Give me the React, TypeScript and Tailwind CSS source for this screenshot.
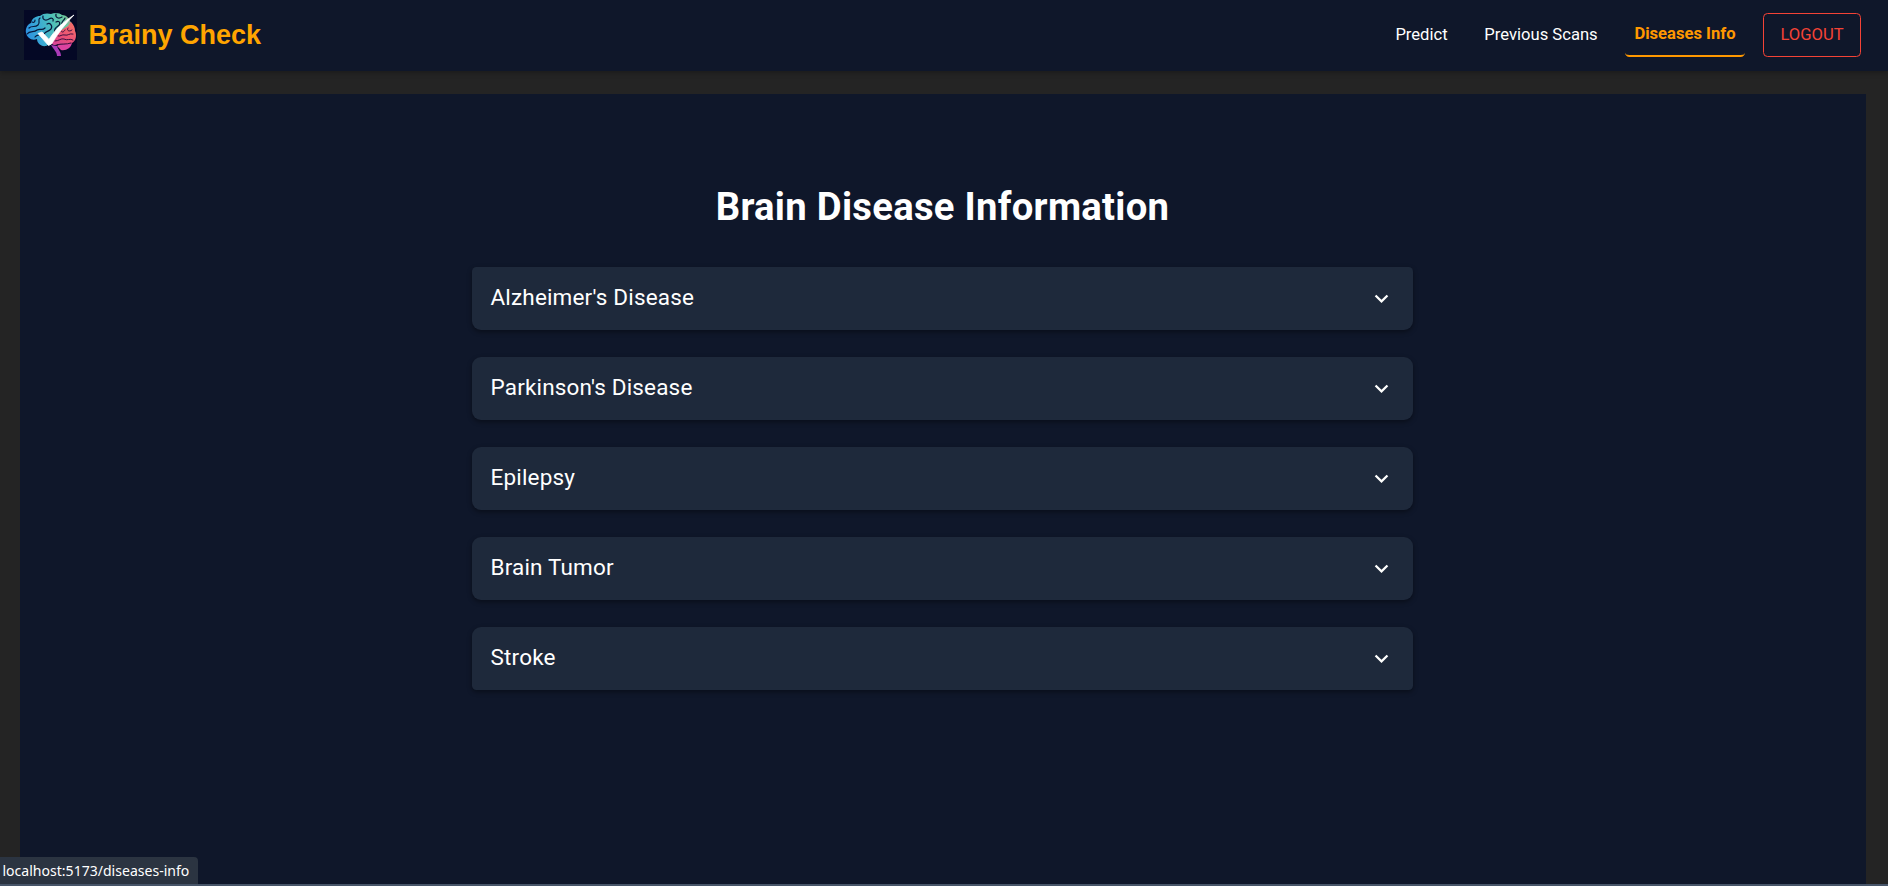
const diseases = [
  "Alzheimer's Disease",
  "Parkinson's Disease",
  'Epilepsy',
  'Brain Tumor',
  'Stroke',
];

function Logo() {
  return (
    <svg className="h-[50px] w-[53px] shrink-0" viewBox="0 0 53 50" fill="none">
      <defs>
        <linearGradient id="cortex" x1="2" y1="26" x2="50" y2="14" gradientUnits="userSpaceOnUse">
          <stop offset="0" stopColor="#2b8fe0" />
          <stop offset="0.3" stopColor="#3aaad4" />
          <stop offset="0.6" stopColor="#4fc0b8" />
          <stop offset="0.85" stopColor="#6cc8a0" />
          <stop offset="1" stopColor="#b98c84" />
        </linearGradient>
        <linearGradient id="lower" x1="46" y1="16" x2="34" y2="38" gradientUnits="userSpaceOnUse">
          <stop offset="0" stopColor="#f26a6a" />
          <stop offset="0.5" stopColor="#ea5077" />
          <stop offset="1" stopColor="#d5429a" />
        </linearGradient>
      </defs>
      <rect width="53" height="50" fill="#040825" />
      <path d="M2 23C1 18 4 14 7 13C8 8 12 6 16 6C19 3 24 3 27 4C31 2 36 3 38 5C42 5 45 8 46 11C48 13 48 15 47 18L28 33L22 36C17 37 13 33 13 29C8 31 3 28 2 23Z" fill="url(#cortex)" />
      <path d="M27 33C30 25 37 20 44 16L47 12C50 15 51 18 51 21C53 25 52 31 48 33C44 35 38 34 34 34C31 36 29 35 27 33Z" fill="url(#lower)" />
      <path d="M33 36C36 33 43 35 48 33C47 38 42 41 37 40Z" fill="#dc43a0" />
      <path d="M27 35L33 36C34 40 37 41 37 46L33 46C33 42 30 40 27 35Z" fill="#a93bb8" />
      <g stroke="#08183c" strokeWidth="1.2" strokeLinecap="round">
        <path d="M5 18C8 15 11 18 14 15C17 12 13 10 16 8M3 24C6 20 10 23 13 20C16 18 18 21 21 18M19 6C18 10 22 11 25 9C28 7 30 9 29 11M32 4C31 8 35 9 38 7M11 27C13 24 17 26 18 23M23 14C26 12 29 16 27 19C24 22 22 21 20 24M32 12C36 10 37 14 34 16C31 18 30 20 31 22M41 8C40 11 37 11 38 14M8 12C10 13 11 12 11 10" />
      </g>
      <g stroke="#3d1040" strokeWidth="1" strokeLinecap="round">
        <path d="M44 18C42 21 46 22 48 20M49 24C45 23 44 26 41 25C38 24 36 27 34 26M49 30C46 28 43 31 40 29C37 28 35 31 31 31M33 35C37 33 42 35 47 33M37 21C38 23 40 22 41 20" />
      </g>
      <path d="M14 23.5L18 22L25 29.5C31 20 39 12 50 5C42 13 34 23 27.5 34L24.5 35.5Z" fill="#fff" stroke="#fff" strokeWidth="0.8" />
    </svg>
  );
}

function Chevron() {
  return (
    <svg className="size-[27px] shrink-0 fill-white" viewBox="0 0 24 24">
      <path d="M16.59 8.59 12 13.17 7.41 8.59 6 10l6 6 6-6z" />
    </svg>
  );
}

function Header() {
  return (
    <header className="relative z-10 flex h-[71px] items-center justify-between bg-[#0f172a] pr-[27px] pl-6 shadow-[0_2px_5px_rgba(0,0,0,0.25)]">
      <div className="flex items-center pb-px">
        <Logo />
        <span className="ml-[11.5px] font-['Liberation_Sans',sans-serif] text-[27px] leading-none font-bold text-[#ffa500]">
          Brainy Check
        </span>
      </div>
      <nav className="mb-[2px] flex h-[44px] items-stretch text-center text-[16.6px] leading-[43px] text-white">
        <a className="mr-[18px] w-[71px]">Predict</a>
        <a className="mr-[18px] w-[132px]">Previous Scans</a>
        <a className="mr-[18px] w-[120px] rounded-[4.5px] border-b-2 border-[#ff9800] leading-[41px] font-bold text-[#ff9800]">
          Diseases Info
        </a>
        <button className="w-[98px] rounded-[4.5px] border border-[#f44336] leading-[41px] text-[#f44336]">
          LOGOUT
        </button>
      </nav>
    </header>
  );
}

export default function App() {
  return (
    <div className="flex h-[886px] flex-col overflow-hidden border-b-2 border-[#475569] bg-[#242424] font-[Roboto,sans-serif]">
      <Header />
      <main className="mt-[23px] mr-[22px] ml-5 flex flex-1 flex-col items-center bg-[#0f172a] pt-[90px] pr-px">
        <h1 className="h-[83px] text-[38.25px] leading-[47px] font-bold tracking-[0.00735em] text-white">
          Brain Disease Information
        </h1>
        <ul className="flex w-[941px] flex-col gap-[27px]">
          {diseases.map((name) => (
            <li
              key={name}
              className="flex h-[63px] items-center justify-between rounded-[9px] bg-[#1e293b] pr-[18px] pl-[18.5px] shadow-[0_2px_5px_rgba(0,0,0,0.4)] first:rounded-t-[4.5px] last:rounded-b-[4.5px]"
            >
              <span className="pb-1 text-[22.5px] leading-9 tracking-[0.0075em] text-white">{name}</span>
              <Chevron />
            </li>
          ))}
        </ul>
      </main>
      <div className="absolute top-[857px] left-0 z-20 flex h-[27px] w-[198px] items-center rounded-tr-[4px] bg-[#2b3441] pl-[2.5px] font-['Noto_Sans',sans-serif] text-[14.05px] whitespace-nowrap text-white">
        localhost:5173/diseases-info
      </div>
    </div>
  );
}
